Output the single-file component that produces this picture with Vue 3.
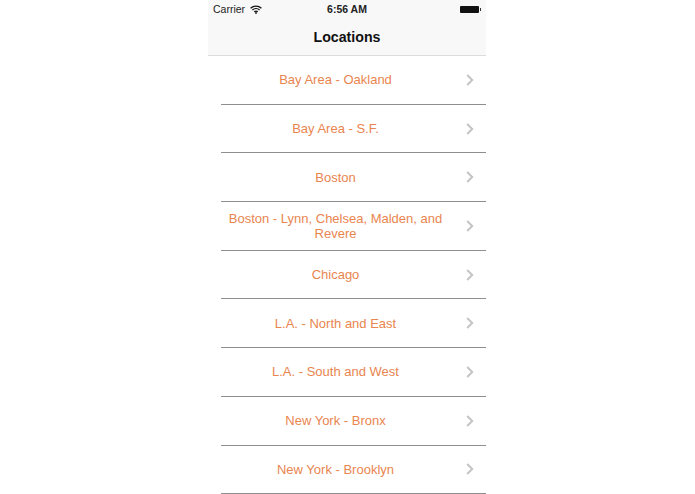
<template>
    <div class="page">
        <div class="phone">
            <div class="top-bar">
                <div class="status-bar">
                    <div class="status-left">
                        <span>Carrier</span>
                        <svg class="wifi" width="12" height="9" viewBox="0 0 12 9">
                            <path d="M0.6 3.2 C3.6 0.4 8.4 0.4 11.4 3.2" />
                            <path d="M2.4 5 C4.4 3.2 7.6 3.2 9.6 5" />
                            <path d="M4.2 6.8 C5.2 6 6.8 6 7.8 6.8" />
                            <circle cx="6" cy="8" r="0.9" />
                        </svg>
                    </div>
                    <span class="time">6:56 AM</span>
                    <div class="battery">
                        <div class="battery-body"></div>
                        <div class="battery-tip"></div>
                    </div>
                </div>
                <div class="nav-title">Locations</div>
            </div>
            <ul class="list">
                <li v-for="location in locations" :key="location" class="row">
                    <span class="row-label">{{ location }}</span>
                    <svg class="chevron" width="8" height="12" viewBox="0 0 8 12">
                        <path d="M1.2 1 L6.2 6 L1.2 11" />
                    </svg>
                </li>
            </ul>
        </div>
    </div>
</template>

<script setup>
const locations = [
    'Bay Area - Oakland',
    'Bay Area - S.F.',
    'Boston',
    'Boston - Lynn, Chelsea, Malden, and Revere',
    'Chicago',
    'L.A. - North and East',
    'L.A. - South and West',
    'New York - Bronx',
    'New York - Brooklyn'
]
</script>

<style>
html,
body {
    margin: 0;
    background: #fff;
    overflow: hidden;
}
</style>

<style scoped>
.page {
    height: 494px;
    display: flex;
    justify-content: center;
    padding-right: 1px;
    overflow: hidden;
    font-family: 'Liberation Sans', Arial, sans-serif;
}
.phone {
    width: 278px;
    flex-shrink: 0;
}
.top-bar {
    height: 55px;
    background: #f8f8f8;
    border-bottom: 1px solid #dcdcdc;
}
.status-bar {
    height: 18px;
    padding: 0 5px;
    display: grid;
    grid-template-columns: 1fr auto 1fr;
    align-items: center;
    font-size: 10.5px;
    color: #222;
}
.status-left {
    display: flex;
    align-items: center;
    gap: 5px;
}
.wifi {
    fill: #111;
}
.wifi path {
    fill: none;
    stroke: #111;
    stroke-width: 1.3;
}
.time {
    font-weight: bold;
}
.battery {
    display: flex;
    align-items: center;
    justify-content: flex-end;
}
.battery-body {
    width: 19px;
    height: 7px;
    background: #111;
    border-radius: 1px;
}
.battery-tip {
    width: 1px;
    height: 3px;
    background: #333;
    margin-left: 1px;
}
.nav-title {
    height: 37px;
    display: flex;
    align-items: center;
    justify-content: center;
    font-size: 14.2px;
    font-weight: bold;
    color: #111;
}
.list {
    list-style: none;
    margin: 0;
    padding: 0 0 0 13px;
}
.row {
    height: 47.7px;
    border-bottom: 1px solid #8e8e8e;
    display: flex;
    align-items: center;
}
.row-label {
    flex: 1;
    padding: 0 5px;
    text-align: center;
    font-size: 13px;
    line-height: 15px;
    color: #e9854f;
}
.chevron {
    margin: 0 12px 0 16px;
    flex-shrink: 0;
}
.chevron path {
    fill: none;
    stroke: #c4c4c4;
    stroke-width: 2;
}
</style>
